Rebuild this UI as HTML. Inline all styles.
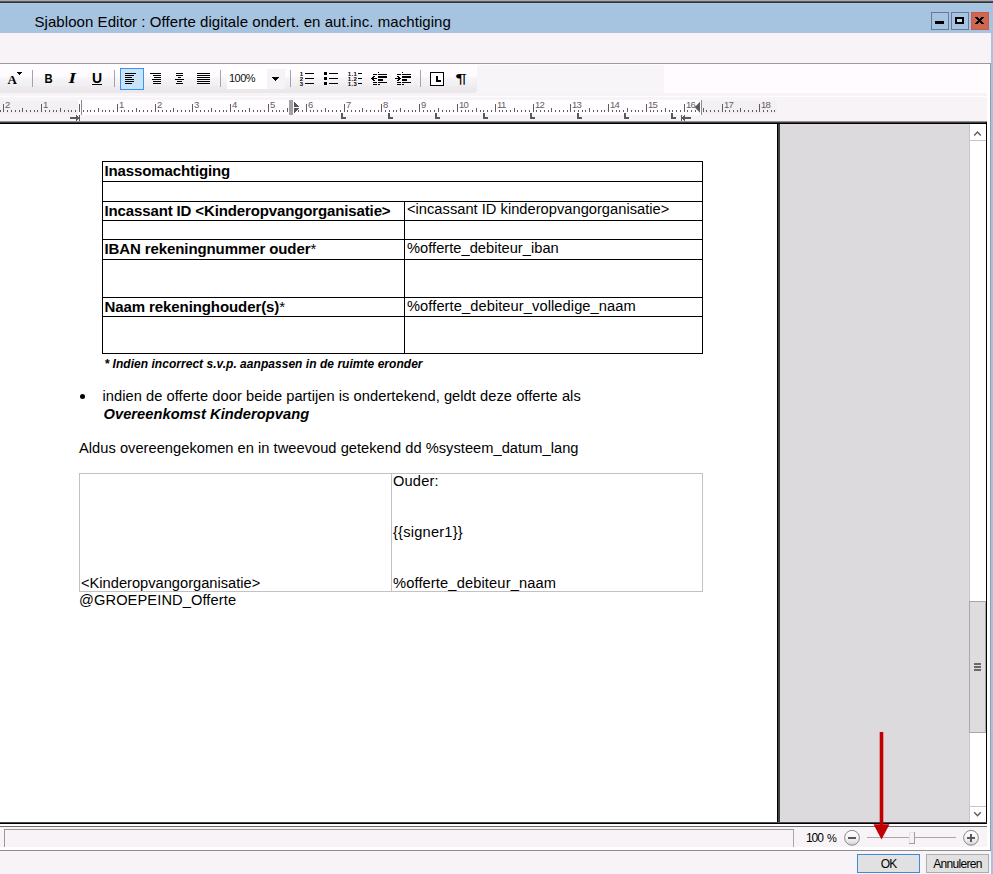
<!DOCTYPE html>
<html lang="nl">
<head>
<meta charset="utf-8">
<title>Sjabloon Editor</title>
<style>
*{box-sizing:border-box;margin:0;padding:0}
html,body{width:993px;height:874px;overflow:hidden;background:#f7f3f7}
body{position:relative;font-family:"Liberation Sans",sans-serif;color:#000}
.abs{position:absolute}
#topshadow{left:0;top:0;width:993px;height:4px;background:linear-gradient(#a9a7a9 0,#a9a7a9 1px,#5c5a5c 1px,#5c5a5c 2px,#302f2f 2px,#302f2f 3px,#aecceb 3px)}
#title{left:0;top:3px;width:993px;height:30px;background:#a6c3e0}
#title .t{position:absolute;left:34.5px;top:10px;font-size:15px;line-height:18px;letter-spacing:0.06px;color:#000;white-space:nowrap}
.wb{position:absolute;top:9px;width:18px;height:18px;border:1px solid #677b97}
#rborder{left:991px;top:33px;width:2px;height:841px;background:#a6c3e0}
#menubg{left:0;top:33px;width:991px;height:30px;background:#f7f3f7}
#tbline{left:0;top:63px;width:991px;height:1px;background:#9c9a9c}
#tbright{left:990px;top:63px;width:1px;height:788px;background:#959aa6}
#tbbg{left:0;top:64px;width:990px;height:33px;background:#fffbff}
#tbstrip{left:0;top:65px;width:477px;height:28px;border-radius:0 3px 3px 0;background:linear-gradient(#fffdff 0,#fdfbfd 42%,#f7f5f7 45%,#f0eef0 74%,#edebed 77%,#e9e7e9 100%)}
#tbstrip2{left:477px;top:65px;width:187px;height:28px;background:#f7f5f7}
#tbunder{left:0;top:93px;width:987px;height:3px;background:#f7f3f7}
#rulerbg{left:0;top:97px;width:987px;height:25px;background:#f7f3f7}
.sep{position:absolute;top:70px;width:1px;height:17px;background:#a5a3a5}
#docframe-top{left:0;top:122px;width:987px;height:2px;background:linear-gradient(#3c3a3c 0,#3c3a3c 1px,#000 1px)}
#docframe-topsh{left:0;top:121px;width:987px;height:1px;background:#939193}
#doc{left:0;top:124px;width:777px;height:698px;background:#fff;overflow:hidden}
#docvline{left:777px;top:124px;width:4px;height:698px;background:linear-gradient(90deg,#000 0,#000 1px,#404040 1px,#404040 3px,#e5e3e5 3px)}
#grayarea{left:780px;top:124px;width:189px;height:698px;background:#dcdadc}
#sb{left:969px;top:124px;width:17px;height:698px;background:#fff;border-left:1px solid #c8c6c8}
#frame-right{left:985.7px;top:122px;width:1.3px;height:702px;background:#000}
#frame-bottom{left:0;top:822px;width:987px;height:2px;background:linear-gradient(#4a484a 0,#4a484a 1px,#000 1px)}
#whitegap{left:0;top:824px;width:990px;height:2px;background:#fff}
#rightwhite{left:987px;top:64px;width:3px;height:786px;background:#fff}
#stline{left:0;top:826px;width:987px;height:1px;background:#6e6c6e}
#stbg{left:0;top:827px;width:987px;height:20px;background:#f7f3f7}
#stwhite{left:0;top:847px;width:990px;height:3px;background:#fff}
#stline2{left:0;top:850px;width:991px;height:1px;background:#8e8c8e}
#botbg{left:0;top:851px;width:991px;height:23px;background:#f7f3f7}
#stpanel{left:4px;top:829px;width:790px;height:18px;border-top:1px solid #9a989a;border-left:1px solid #9a989a;border-right:1px solid #a9a7a9}
.btn{position:absolute;top:854px;height:19px;background:#e1e1e1;border:1px solid #adadad;font-size:12px;line-height:18px;text-align:center;color:#000}
.dt{position:absolute;white-space:nowrap;font-size:14.67px;line-height:17px;color:#000}
.b{font-weight:bold}
.hl{position:absolute;height:1px;background:#000}
.vl{position:absolute;width:1px;background:#000}
.gl{position:absolute;background:#c3c1c3}
</style>
</head>
<body>
<div class="abs" id="title"><div class="t">Sjabloon Editor : Offerte digitale ondert. en aut.inc. machtiging</div>
  <div class="wb" style="left:931px"></div>
  <div class="wb" style="left:951px"></div>
  <div class="wb" style="left:971px;background:#ce6651;border-color:#c45c48"></div>
<svg class="abs" style="left:0;top:0" width="993" height="30" viewBox="0 3 993 30" shape-rendering="crispEdges" fill="#000">
<rect x="935" y="21" width="9" height="3"/>
<rect x="955" y="17" width="9" height="7"/><rect x="957" y="19" width="5" height="3" fill="#c6dbf0"/>
<rect x="975" y="17" width="3" height="1"/><rect x="981" y="17" width="3" height="1"/>
<rect x="976" y="18" width="3" height="1"/><rect x="980" y="18" width="3" height="1"/>
<rect x="977" y="19" width="5" height="1"/>
<rect x="978" y="20" width="3" height="1"/>
<rect x="977" y="21" width="5" height="1"/>
<rect x="976" y="22" width="3" height="1"/><rect x="980" y="22" width="3" height="1"/>
<rect x="975" y="23" width="3" height="1"/><rect x="981" y="23" width="3" height="1"/>
</svg>
</div>
<div class="abs" id="topshadow"></div>
<div class="abs" id="menubg"></div>
<div class="abs" id="tbbg"></div>
<div class="abs" id="tbstrip2"></div>
<div class="abs" id="tbstrip"></div>
<div class="abs" id="tbunder"></div>
<div class="abs" id="rulerbg"></div>
<div class="abs" id="tbline"></div>
<div class="abs" id="rightwhite"></div>
<div class="abs" id="tbright"></div>
<div class="abs" id="rborder"></div>
<!-- toolbar widgets -->
<div class="sep" style="left:32px"></div>
<div class="sep" style="left:114px"></div>
<div class="sep" style="left:220px"></div>
<div class="sep" style="left:290px"></div>
<div class="sep" style="left:420px"></div>
<div class="abs" id="selbtn" style="left:120px;top:68px;width:24px;height:22px;background:#c9e3fb;border:1px solid #3796f5"></div>
<div class="abs" id="combo" style="left:227px;top:69px;width:58px;height:20px;background:#fff"><div class="abs" style="left:40px;top:0;width:18px;height:20px;background:#f6f3f6"></div><div class="abs" id="combotxt" style="left:2px;top:3px;font-size:11px;line-height:13px;letter-spacing:-0.55px;color:#111">100%</div></div>
<svg class="abs" id="tbicons" style="left:0;top:0" width="480" height="100" viewBox="0 0 480 100" shape-rendering="crispEdges" fill="#000"><rect x="17" y="72" width="5" height="1"/><rect x="18" y="73" width="3" height="1"/><rect x="19" y="74" width="1" height="1"/><rect x="92" y="84" width="10" height="1"/><rect x="125" y="73" width="11" height="1"/><rect x="125" y="75" width="9" height="1"/><rect x="125" y="77" width="7" height="1"/><rect x="125" y="79" width="9" height="1"/><rect x="125" y="81" width="9" height="1"/><rect x="125" y="83" width="7" height="1"/><rect x="150" y="73" width="11" height="1"/><rect x="153" y="75" width="8" height="1"/><rect x="154" y="77" width="7" height="1"/><rect x="152" y="79" width="9" height="1"/><rect x="153" y="81" width="8" height="1"/><rect x="153" y="83" width="8" height="1"/><rect x="176" y="73" width="7" height="1"/><rect x="176" y="75" width="7" height="1"/><rect x="178" y="77" width="3" height="1"/><rect x="175" y="79" width="9" height="1"/><rect x="177" y="81" width="5" height="1"/><rect x="176" y="83" width="7" height="1"/><rect x="197" y="73" width="13" height="1"/><rect x="197" y="75" width="13" height="1"/><rect x="197" y="77" width="13" height="1"/><rect x="197" y="79" width="13" height="1"/><rect x="197" y="81" width="13" height="1"/><rect x="197" y="83" width="13" height="1"/><rect x="272" y="77" width="7" height="1"/><rect x="273" y="78" width="5" height="1"/><rect x="274" y="79" width="3" height="1"/><rect x="275" y="80" width="1" height="1"/><rect x="305" y="73" width="9" height="1"/><rect x="305" y="78" width="9" height="1"/><rect x="305" y="83" width="9" height="1"/><rect x="324" y="72" width="3" height="3"/><rect x="324" y="77" width="3" height="3"/><rect x="324" y="82" width="3" height="3"/><rect x="329" y="73" width="9" height="1"/><rect x="329" y="78" width="9" height="1"/><rect x="329" y="83" width="9" height="1"/><rect x="358" y="73" width="4" height="1"/><rect x="358" y="78" width="4" height="1"/><rect x="358" y="83" width="4" height="1"/><rect x="378" y="72" width="1" height="1"/><rect x="373" y="74" width="4" height="1"/><rect x="378" y="74" width="9" height="1"/><rect x="373" y="76" width="2" height="1"/><rect x="378" y="76" width="9" height="1"/><rect x="372" y="77" width="2" height="1"/><rect x="378" y="77" width="9" height="1"/><rect x="371" y="78" width="6" height="1"/><rect x="372" y="79" width="2" height="1"/><rect x="378" y="79" width="5" height="1"/><rect x="373" y="80" width="2" height="1"/><rect x="378" y="80" width="5" height="1"/><rect x="373" y="82" width="4" height="1"/><rect x="378" y="82" width="9" height="1"/><rect x="373" y="84" width="4" height="1"/><rect x="378" y="84" width="2" height="1"/><rect x="402" y="72" width="1" height="1"/><rect x="397" y="74" width="4" height="1"/><rect x="402" y="74" width="9" height="1"/><rect x="397" y="76" width="2" height="1"/><rect x="402" y="76" width="9" height="1"/><rect x="398" y="77" width="2" height="1"/><rect x="402" y="77" width="9" height="1"/><rect x="395" y="78" width="6" height="1"/><rect x="398" y="79" width="2" height="1"/><rect x="402" y="79" width="5" height="1"/><rect x="397" y="80" width="2" height="1"/><rect x="402" y="80" width="5" height="1"/><rect x="397" y="82" width="4" height="1"/><rect x="402" y="82" width="9" height="1"/><rect x="397" y="84" width="4" height="1"/><rect x="402" y="84" width="2" height="1"/><rect x="430.5" y="72.5" width="13" height="13" fill="#fff" stroke="#000" stroke-width="1"/><rect x="436" y="76" width="2" height="6"/><rect x="436" y="80" width="5" height="2"/><text x="7.6" y="84" font-family="Liberation Serif, serif" font-weight="bold" font-size="13px">A</text><text transform="translate(44.5 83) scale(.9 1)" font-family="Liberation Sans, sans-serif" font-weight="bold" font-size="12.5px">B</text><text transform="translate(68.6 83) scale(1.3 1)" font-family="Liberation Serif, serif" font-weight="bold" font-style="italic" font-size="15px">I</text><text x="91.9" y="83" font-family="Liberation Sans, sans-serif" font-weight="bold" font-size="14px">U</text><text x="299.8" y="76" font-family="Liberation Sans, sans-serif" font-weight="bold" font-size="6px">1</text><text x="299.8" y="81" font-family="Liberation Sans, sans-serif" font-weight="bold" font-size="6px">2</text><text x="299.8" y="86" font-family="Liberation Sans, sans-serif" font-weight="bold" font-size="6px">3</text><text x="347.8" y="76" font-family="Liberation Sans, sans-serif" font-weight="bold" font-size="6px" letter-spacing="0.3">1.1</text><text x="347.8" y="81" font-family="Liberation Sans, sans-serif" font-weight="bold" font-size="6px" letter-spacing="0.3">1.2</text><text x="347.8" y="86" font-family="Liberation Sans, sans-serif" font-weight="bold" font-size="6px" letter-spacing="0.3">1.3</text><text transform="translate(455.2 82.6) scale(1.62 1)" font-family="Liberation Sans, sans-serif" font-size="13.5px">¶</text></svg>
<svg class="abs" id="ruler" style="left:0;top:0" width="780" height="124" viewBox="0 0 780 124" shape-rendering="crispEdges"><rect x="0" y="101" width="78" height="13" fill="#f3f0f3"/><rect x="702" y="101" width="75" height="13" fill="#f2f0f2"/><rect x="78" y="100" width="4" height="15" fill="#fffdff"/><rect x="82" y="100" width="619" height="15" fill="#fffdff"/><rect x="81" y="100" width="1" height="15" fill="#8c8a8c"/><rect x="701" y="100" width="1" height="15" fill="#8c8a8c"/><rect x="0" y="110" width="1" height="2" fill="#5f5d5f"/><rect x="3" y="104" width="1" height="8" fill="#5f5d5f"/><rect x="7" y="110" width="1" height="2" fill="#5f5d5f"/><rect x="11" y="110" width="1" height="2" fill="#5f5d5f"/><rect x="15" y="110" width="1" height="2" fill="#5f5d5f"/><rect x="19" y="110" width="1" height="2" fill="#5f5d5f"/><rect x="22" y="108" width="1" height="4" fill="#5f5d5f"/><rect x="26" y="110" width="1" height="2" fill="#5f5d5f"/><rect x="30" y="110" width="1" height="2" fill="#5f5d5f"/><rect x="34" y="110" width="1" height="2" fill="#5f5d5f"/><rect x="37" y="110" width="1" height="2" fill="#5f5d5f"/><rect x="41" y="104" width="1" height="8" fill="#5f5d5f"/><rect x="45" y="110" width="1" height="2" fill="#5f5d5f"/><rect x="49" y="110" width="1" height="2" fill="#5f5d5f"/><rect x="53" y="110" width="1" height="2" fill="#5f5d5f"/><rect x="56" y="110" width="1" height="2" fill="#5f5d5f"/><rect x="60" y="108" width="1" height="4" fill="#5f5d5f"/><rect x="64" y="110" width="1" height="2" fill="#5f5d5f"/><rect x="68" y="110" width="1" height="2" fill="#5f5d5f"/><rect x="71" y="110" width="1" height="2" fill="#5f5d5f"/><rect x="75" y="110" width="1" height="2" fill="#5f5d5f"/><rect x="79" y="104" width="1" height="8" fill="#5f5d5f"/><rect x="83" y="110" width="1" height="2" fill="#5f5d5f"/><rect x="87" y="110" width="1" height="2" fill="#5f5d5f"/><rect x="90" y="110" width="1" height="2" fill="#5f5d5f"/><rect x="94" y="110" width="1" height="2" fill="#5f5d5f"/><rect x="98" y="108" width="1" height="4" fill="#5f5d5f"/><rect x="102" y="110" width="1" height="2" fill="#5f5d5f"/><rect x="105" y="110" width="1" height="2" fill="#5f5d5f"/><rect x="109" y="110" width="1" height="2" fill="#5f5d5f"/><rect x="113" y="110" width="1" height="2" fill="#5f5d5f"/><rect x="117" y="104" width="1" height="8" fill="#5f5d5f"/><rect x="121" y="110" width="1" height="2" fill="#5f5d5f"/><rect x="124" y="110" width="1" height="2" fill="#5f5d5f"/><rect x="128" y="110" width="1" height="2" fill="#5f5d5f"/><rect x="132" y="110" width="1" height="2" fill="#5f5d5f"/><rect x="136" y="108" width="1" height="4" fill="#5f5d5f"/><rect x="139" y="110" width="1" height="2" fill="#5f5d5f"/><rect x="143" y="110" width="1" height="2" fill="#5f5d5f"/><rect x="147" y="110" width="1" height="2" fill="#5f5d5f"/><rect x="151" y="110" width="1" height="2" fill="#5f5d5f"/><rect x="155" y="104" width="1" height="8" fill="#5f5d5f"/><rect x="158" y="110" width="1" height="2" fill="#5f5d5f"/><rect x="162" y="110" width="1" height="2" fill="#5f5d5f"/><rect x="166" y="110" width="1" height="2" fill="#5f5d5f"/><rect x="170" y="110" width="1" height="2" fill="#5f5d5f"/><rect x="173" y="108" width="1" height="4" fill="#5f5d5f"/><rect x="177" y="110" width="1" height="2" fill="#5f5d5f"/><rect x="181" y="110" width="1" height="2" fill="#5f5d5f"/><rect x="185" y="110" width="1" height="2" fill="#5f5d5f"/><rect x="189" y="110" width="1" height="2" fill="#5f5d5f"/><rect x="192" y="104" width="1" height="8" fill="#5f5d5f"/><rect x="196" y="110" width="1" height="2" fill="#5f5d5f"/><rect x="200" y="110" width="1" height="2" fill="#5f5d5f"/><rect x="204" y="110" width="1" height="2" fill="#5f5d5f"/><rect x="208" y="110" width="1" height="2" fill="#5f5d5f"/><rect x="211" y="108" width="1" height="4" fill="#5f5d5f"/><rect x="215" y="110" width="1" height="2" fill="#5f5d5f"/><rect x="219" y="110" width="1" height="2" fill="#5f5d5f"/><rect x="223" y="110" width="1" height="2" fill="#5f5d5f"/><rect x="226" y="110" width="1" height="2" fill="#5f5d5f"/><rect x="230" y="104" width="1" height="8" fill="#5f5d5f"/><rect x="234" y="110" width="1" height="2" fill="#5f5d5f"/><rect x="238" y="110" width="1" height="2" fill="#5f5d5f"/><rect x="242" y="110" width="1" height="2" fill="#5f5d5f"/><rect x="245" y="110" width="1" height="2" fill="#5f5d5f"/><rect x="249" y="108" width="1" height="4" fill="#5f5d5f"/><rect x="253" y="110" width="1" height="2" fill="#5f5d5f"/><rect x="257" y="110" width="1" height="2" fill="#5f5d5f"/><rect x="260" y="110" width="1" height="2" fill="#5f5d5f"/><rect x="264" y="110" width="1" height="2" fill="#5f5d5f"/><rect x="268" y="104" width="1" height="8" fill="#5f5d5f"/><rect x="272" y="110" width="1" height="2" fill="#5f5d5f"/><rect x="276" y="110" width="1" height="2" fill="#5f5d5f"/><rect x="279" y="110" width="1" height="2" fill="#5f5d5f"/><rect x="283" y="110" width="1" height="2" fill="#5f5d5f"/><rect x="287" y="108" width="1" height="4" fill="#5f5d5f"/><rect x="291" y="110" width="1" height="2" fill="#5f5d5f"/><rect x="294" y="110" width="1" height="2" fill="#5f5d5f"/><rect x="298" y="110" width="1" height="2" fill="#5f5d5f"/><rect x="302" y="110" width="1" height="2" fill="#5f5d5f"/><rect x="306" y="104" width="1" height="8" fill="#5f5d5f"/><rect x="310" y="110" width="1" height="2" fill="#5f5d5f"/><rect x="313" y="110" width="1" height="2" fill="#5f5d5f"/><rect x="317" y="110" width="1" height="2" fill="#5f5d5f"/><rect x="321" y="110" width="1" height="2" fill="#5f5d5f"/><rect x="325" y="108" width="1" height="4" fill="#5f5d5f"/><rect x="328" y="110" width="1" height="2" fill="#5f5d5f"/><rect x="332" y="110" width="1" height="2" fill="#5f5d5f"/><rect x="336" y="110" width="1" height="2" fill="#5f5d5f"/><rect x="340" y="110" width="1" height="2" fill="#5f5d5f"/><rect x="344" y="104" width="1" height="8" fill="#5f5d5f"/><rect x="347" y="110" width="1" height="2" fill="#5f5d5f"/><rect x="351" y="110" width="1" height="2" fill="#5f5d5f"/><rect x="355" y="110" width="1" height="2" fill="#5f5d5f"/><rect x="359" y="110" width="1" height="2" fill="#5f5d5f"/><rect x="362" y="108" width="1" height="4" fill="#5f5d5f"/><rect x="366" y="110" width="1" height="2" fill="#5f5d5f"/><rect x="370" y="110" width="1" height="2" fill="#5f5d5f"/><rect x="374" y="110" width="1" height="2" fill="#5f5d5f"/><rect x="378" y="110" width="1" height="2" fill="#5f5d5f"/><rect x="381" y="104" width="1" height="8" fill="#5f5d5f"/><rect x="385" y="110" width="1" height="2" fill="#5f5d5f"/><rect x="389" y="110" width="1" height="2" fill="#5f5d5f"/><rect x="393" y="110" width="1" height="2" fill="#5f5d5f"/><rect x="396" y="110" width="1" height="2" fill="#5f5d5f"/><rect x="400" y="108" width="1" height="4" fill="#5f5d5f"/><rect x="404" y="110" width="1" height="2" fill="#5f5d5f"/><rect x="408" y="110" width="1" height="2" fill="#5f5d5f"/><rect x="412" y="110" width="1" height="2" fill="#5f5d5f"/><rect x="415" y="110" width="1" height="2" fill="#5f5d5f"/><rect x="419" y="104" width="1" height="8" fill="#5f5d5f"/><rect x="423" y="110" width="1" height="2" fill="#5f5d5f"/><rect x="427" y="110" width="1" height="2" fill="#5f5d5f"/><rect x="430" y="110" width="1" height="2" fill="#5f5d5f"/><rect x="434" y="110" width="1" height="2" fill="#5f5d5f"/><rect x="438" y="108" width="1" height="4" fill="#5f5d5f"/><rect x="442" y="110" width="1" height="2" fill="#5f5d5f"/><rect x="446" y="110" width="1" height="2" fill="#5f5d5f"/><rect x="449" y="110" width="1" height="2" fill="#5f5d5f"/><rect x="453" y="110" width="1" height="2" fill="#5f5d5f"/><rect x="457" y="104" width="1" height="8" fill="#5f5d5f"/><rect x="461" y="110" width="1" height="2" fill="#5f5d5f"/><rect x="465" y="110" width="1" height="2" fill="#5f5d5f"/><rect x="468" y="110" width="1" height="2" fill="#5f5d5f"/><rect x="472" y="110" width="1" height="2" fill="#5f5d5f"/><rect x="476" y="108" width="1" height="4" fill="#5f5d5f"/><rect x="480" y="110" width="1" height="2" fill="#5f5d5f"/><rect x="483" y="110" width="1" height="2" fill="#5f5d5f"/><rect x="487" y="110" width="1" height="2" fill="#5f5d5f"/><rect x="491" y="110" width="1" height="2" fill="#5f5d5f"/><rect x="495" y="104" width="1" height="8" fill="#5f5d5f"/><rect x="499" y="110" width="1" height="2" fill="#5f5d5f"/><rect x="502" y="110" width="1" height="2" fill="#5f5d5f"/><rect x="506" y="110" width="1" height="2" fill="#5f5d5f"/><rect x="510" y="110" width="1" height="2" fill="#5f5d5f"/><rect x="514" y="108" width="1" height="4" fill="#5f5d5f"/><rect x="517" y="110" width="1" height="2" fill="#5f5d5f"/><rect x="521" y="110" width="1" height="2" fill="#5f5d5f"/><rect x="525" y="110" width="1" height="2" fill="#5f5d5f"/><rect x="529" y="110" width="1" height="2" fill="#5f5d5f"/><rect x="533" y="104" width="1" height="8" fill="#5f5d5f"/><rect x="536" y="110" width="1" height="2" fill="#5f5d5f"/><rect x="540" y="110" width="1" height="2" fill="#5f5d5f"/><rect x="544" y="110" width="1" height="2" fill="#5f5d5f"/><rect x="548" y="110" width="1" height="2" fill="#5f5d5f"/><rect x="551" y="108" width="1" height="4" fill="#5f5d5f"/><rect x="555" y="110" width="1" height="2" fill="#5f5d5f"/><rect x="559" y="110" width="1" height="2" fill="#5f5d5f"/><rect x="563" y="110" width="1" height="2" fill="#5f5d5f"/><rect x="567" y="110" width="1" height="2" fill="#5f5d5f"/><rect x="570" y="104" width="1" height="8" fill="#5f5d5f"/><rect x="574" y="110" width="1" height="2" fill="#5f5d5f"/><rect x="578" y="110" width="1" height="2" fill="#5f5d5f"/><rect x="582" y="110" width="1" height="2" fill="#5f5d5f"/><rect x="585" y="110" width="1" height="2" fill="#5f5d5f"/><rect x="589" y="108" width="1" height="4" fill="#5f5d5f"/><rect x="593" y="110" width="1" height="2" fill="#5f5d5f"/><rect x="597" y="110" width="1" height="2" fill="#5f5d5f"/><rect x="601" y="110" width="1" height="2" fill="#5f5d5f"/><rect x="604" y="110" width="1" height="2" fill="#5f5d5f"/><rect x="608" y="104" width="1" height="8" fill="#5f5d5f"/><rect x="612" y="110" width="1" height="2" fill="#5f5d5f"/><rect x="616" y="110" width="1" height="2" fill="#5f5d5f"/><rect x="619" y="110" width="1" height="2" fill="#5f5d5f"/><rect x="623" y="110" width="1" height="2" fill="#5f5d5f"/><rect x="627" y="108" width="1" height="4" fill="#5f5d5f"/><rect x="631" y="110" width="1" height="2" fill="#5f5d5f"/><rect x="635" y="110" width="1" height="2" fill="#5f5d5f"/><rect x="638" y="110" width="1" height="2" fill="#5f5d5f"/><rect x="642" y="110" width="1" height="2" fill="#5f5d5f"/><rect x="646" y="104" width="1" height="8" fill="#5f5d5f"/><rect x="650" y="110" width="1" height="2" fill="#5f5d5f"/><rect x="653" y="110" width="1" height="2" fill="#5f5d5f"/><rect x="657" y="110" width="1" height="2" fill="#5f5d5f"/><rect x="661" y="110" width="1" height="2" fill="#5f5d5f"/><rect x="665" y="108" width="1" height="4" fill="#5f5d5f"/><rect x="669" y="110" width="1" height="2" fill="#5f5d5f"/><rect x="672" y="110" width="1" height="2" fill="#5f5d5f"/><rect x="676" y="110" width="1" height="2" fill="#5f5d5f"/><rect x="680" y="110" width="1" height="2" fill="#5f5d5f"/><rect x="684" y="104" width="1" height="8" fill="#5f5d5f"/><rect x="687" y="110" width="1" height="2" fill="#5f5d5f"/><rect x="691" y="110" width="1" height="2" fill="#5f5d5f"/><rect x="695" y="110" width="1" height="2" fill="#5f5d5f"/><rect x="699" y="110" width="1" height="2" fill="#5f5d5f"/><rect x="703" y="108" width="1" height="4" fill="#5f5d5f"/><rect x="706" y="110" width="1" height="2" fill="#5f5d5f"/><rect x="710" y="110" width="1" height="2" fill="#5f5d5f"/><rect x="714" y="110" width="1" height="2" fill="#5f5d5f"/><rect x="718" y="110" width="1" height="2" fill="#5f5d5f"/><rect x="722" y="104" width="1" height="8" fill="#5f5d5f"/><rect x="725" y="110" width="1" height="2" fill="#5f5d5f"/><rect x="729" y="110" width="1" height="2" fill="#5f5d5f"/><rect x="733" y="110" width="1" height="2" fill="#5f5d5f"/><rect x="737" y="110" width="1" height="2" fill="#5f5d5f"/><rect x="740" y="108" width="1" height="4" fill="#5f5d5f"/><rect x="744" y="110" width="1" height="2" fill="#5f5d5f"/><rect x="748" y="110" width="1" height="2" fill="#5f5d5f"/><rect x="752" y="110" width="1" height="2" fill="#5f5d5f"/><rect x="756" y="110" width="1" height="2" fill="#5f5d5f"/><rect x="759" y="104" width="1" height="8" fill="#5f5d5f"/><rect x="763" y="110" width="1" height="2" fill="#5f5d5f"/><rect x="767" y="110" width="1" height="2" fill="#5f5d5f"/><rect x="771" y="110" width="1" height="2" fill="#5f5d5f"/><rect x="774" y="110" width="1" height="2" fill="#5f5d5f"/><g font-family="Liberation Sans, sans-serif" font-size="9.5px" letter-spacing="-0.7" fill="#626062" shape-rendering="auto"><text x="5" y="108" >2</text><text x="43" y="108" >1</text><text x="119" y="108" >1</text><text x="157" y="108" >2</text><text x="194" y="108" >3</text><text x="232" y="108" >4</text><text x="270" y="108" >5</text><text x="308" y="108" >6</text><text x="346" y="108" >7</text><text x="383" y="108" >8</text><text x="421" y="108" >9</text><text x="459" y="108" >10</text><text x="497" y="108" >11</text><text x="535" y="108" >12</text><text x="572" y="108" >13</text><text x="610" y="108" >14</text><text x="648" y="108" >15</text><text x="686" y="108" >16</text><text x="724" y="108" >17</text><text x="761" y="108" >18</text></g><rect x="289" y="100" width="4" height="15" fill="#a3a1a3"/><rect x="294" y="102" width="1" height="1" fill="#565656"/><rect x="294" y="112" width="1" height="1" fill="#565656"/><rect x="294" y="103" width="2" height="1" fill="#565656"/><rect x="294" y="111" width="2" height="1" fill="#565656"/><rect x="294" y="104" width="3" height="1" fill="#565656"/><rect x="294" y="110" width="3" height="1" fill="#565656"/><rect x="294" y="105" width="4" height="1" fill="#565656"/><rect x="294" y="109" width="4" height="1" fill="#565656"/><rect x="294" y="106" width="5" height="1" fill="#565656"/><rect x="294" y="108" width="5" height="1" fill="#565656"/><polygon points="700,101.8 700,112.8 694.7,107.3" fill="#5a5a5a" shape-rendering="auto"/><rect x="341" y="113" width="2" height="6" fill="#5a585a"/><rect x="341" y="117" width="5" height="2" fill="#5a585a"/><rect x="388" y="113" width="2" height="6" fill="#5a585a"/><rect x="388" y="117" width="5" height="2" fill="#5a585a"/><rect x="435" y="113" width="2" height="6" fill="#5a585a"/><rect x="435" y="117" width="5" height="2" fill="#5a585a"/><rect x="483" y="113" width="2" height="6" fill="#5a585a"/><rect x="483" y="117" width="5" height="2" fill="#5a585a"/><rect x="530" y="113" width="2" height="6" fill="#5a585a"/><rect x="530" y="117" width="5" height="2" fill="#5a585a"/><rect x="577" y="113" width="2" height="6" fill="#5a585a"/><rect x="577" y="117" width="5" height="2" fill="#5a585a"/><rect x="624" y="113" width="2" height="6" fill="#5a585a"/><rect x="624" y="117" width="5" height="2" fill="#5a585a"/><rect x="671" y="113" width="2" height="6" fill="#5a585a"/><rect x="671" y="117" width="5" height="2" fill="#5a585a"/><rect x="70" y="117" width="9" height="2" fill="#5a585a"/><rect x="76" y="115" width="1" height="6" fill="#5a585a"/><rect x="77" y="116" width="1" height="4" fill="#5a585a"/><rect x="79" y="115" width="1" height="6" fill="#5a585a"/><rect x="681" y="115" width="1" height="6" fill="#5a585a"/><rect x="683" y="117" width="8" height="2" fill="#5a585a"/><rect x="684" y="115" width="1" height="6" fill="#5a585a"/><rect x="683" y="116" width="1" height="4" fill="#5a585a"/><rect x="682" y="117" width="1" height="2" fill="#5a585a"/></svg>

<div class="abs" id="doc"></div>

<!-- document content -->
<div id="doccontent">
<!-- table 1 borders -->
<div class="hl" style="left:102px;top:161px;width:601px"></div>
<div class="hl" style="left:102px;top:181px;width:601px"></div>
<div class="hl" style="left:102px;top:201px;width:601px"></div>
<div class="hl" style="left:102px;top:220px;width:601px"></div>
<div class="hl" style="left:102px;top:239px;width:601px"></div>
<div class="hl" style="left:102px;top:259px;width:601px"></div>
<div class="hl" style="left:102px;top:297px;width:601px"></div>
<div class="hl" style="left:102px;top:316px;width:601px"></div>
<div class="hl" style="left:102px;top:353px;width:601px"></div>
<div class="vl" style="left:102px;top:161px;height:193px"></div>
<div class="vl" style="left:702px;top:161px;height:193px"></div>
<div class="vl" style="left:404px;top:201px;height:153px"></div>
<div class="dt b" style="left:104.5px;top:162.3px;font-size:15px;letter-spacing:-.12px">Inassomachtiging</div>
<div class="dt b" style="left:104.5px;top:202.3px;font-size:15px;letter-spacing:-.13px">Incassant ID &lt;Kinderopvangorganisatie&gt;</div>
<div class="dt" style="left:407px;top:201px;letter-spacing:.02px">&lt;incassant ID kinderopvangorganisatie&gt;</div>
<div class="dt b" style="left:104.5px;top:240.3px;font-size:15px;letter-spacing:-.1px">IBAN rekeningnummer ouder<span style="font-weight:normal">*</span></div>
<div class="dt" style="left:407px;top:239.5px;letter-spacing:.02px">%offerte_debiteur_iban</div>
<div class="dt b" style="left:104.5px;top:297.8px;font-size:15px;letter-spacing:-.09px">Naam rekeninghouder(s)<span style="font-weight:normal">*</span></div>
<div class="dt" style="left:407px;top:297.5px;letter-spacing:.08px">%offerte_debiteur_volledige_naam</div>
<div class="dt b" style="left:104.5px;top:356.7px;font-size:12px;line-height:14px;font-style:italic;letter-spacing:.035px">* Indien incorrect s.v.p. aanpassen in de ruimte eronder</div>
<!-- bullet paragraph -->
<div class="abs" style="left:79.5px;top:393.8px;width:5.4px;height:5.4px;border-radius:50%;background:#000"></div>
<div class="dt" style="left:102.5px;top:388px;letter-spacing:.05px">indien de offerte door beide partijen is ondertekend, geldt deze offerte als</div>
<div class="dt b" style="left:103.5px;top:406px;font-style:italic;letter-spacing:.05px">Overeenkomst Kinderopvang</div>
<div class="dt" style="left:79px;top:439.5px;letter-spacing:.025px">Aldus overeengekomen en in tweevoud getekend dd %systeem_datum_lang</div>
<!-- table 2 -->
<div class="gl" style="left:79px;top:473px;width:624px;height:1px"></div>
<div class="gl" style="left:79px;top:591px;width:624px;height:1px"></div>
<div class="gl" style="left:79px;top:473px;width:1px;height:119px"></div>
<div class="gl" style="left:391px;top:473px;width:1px;height:119px"></div>
<div class="gl" style="left:702px;top:473px;width:1px;height:119px"></div>
<div class="dt" style="left:393px;top:473px;letter-spacing:.15px">Ouder:</div>
<div class="dt" style="left:393px;top:524px;letter-spacing:.2px">{{signer1}}</div>
<div class="dt" style="left:393px;top:575px;letter-spacing:.13px">%offerte_debiteur_naam</div>
<div class="dt" style="left:81px;top:575px">&lt;Kinderopvangorganisatie&gt;</div>
<div class="dt" style="left:79px;top:592px;letter-spacing:.09px">@GROEPEIND_Offerte</div>
</div>
<div class="abs" id="docvline"></div>
<div class="abs" id="grayarea"></div>
<div class="abs" id="sb"></div>
<div class="abs" id="docframe-topsh"></div>
<div class="abs" id="docframe-top"></div>
<div class="abs" id="frame-right"></div>
<div class="abs" id="frame-bottom"></div>
<div class="abs" id="whitegap"></div>
<div class="abs" id="stline"></div>
<div class="abs" id="stbg"></div>
<div class="abs" id="stpanel"></div>
<div class="abs" id="stwhite"></div>
<div class="abs" id="stline2"></div>
<div class="abs" id="botbg"></div>
<!-- scrollbar details -->
<div class="abs" style="left:970px;top:140px;width:16px;height:1px;background:#c6c4c6"></div>
<div class="abs" style="left:970px;top:806px;width:16px;height:1px;background:#c6c4c6"></div>
<div class="abs" id="thumb" style="left:969px;top:601px;width:17px;height:132px;background:#dedcde;border:1px solid #a9a7a9"></div>
<svg class="abs" style="left:960px;top:124px" width="30" height="700" viewBox="960 124 30 700">
<polyline points="974.2,135.4 977.5,131.9 980.8,135.4" fill="none" stroke="#5e5c5e" stroke-width="1.4"/>
<polyline points="974.2,812.2 977.5,815.7 980.8,812.2" fill="none" stroke="#5e5c5e" stroke-width="1.4"/>
<g shape-rendering="crispEdges" fill="#6a686a"><rect x="974" y="663" width="7" height="2"/><rect x="974" y="666" width="7" height="2"/><rect x="974" y="669" width="7" height="2"/></g>
</svg>
<!-- zoom controls -->
<div class="abs" id="zoomtxt" style="left:806px;top:831px;font-size:12px;line-height:14px;letter-spacing:-1.05px;word-spacing:1.8px;color:#000;white-space:nowrap">100 <span style="font-size:11px;letter-spacing:0">%</span></div>
<svg class="abs" style="left:840px;top:826px" width="150" height="24" viewBox="840 826 150 24">
<defs><linearGradient id="cg" x1="0" y1="0" x2="0" y2="1"><stop offset="0" stop-color="#ffffff"/><stop offset="0.55" stop-color="#f4f2f4"/><stop offset="1" stop-color="#d4d2d4"/></linearGradient></defs>
<circle cx="852" cy="837.8" r="7.4" fill="url(#cg)" stroke="#8c8a8c" stroke-width="1"/>
<circle cx="971" cy="837.8" r="7.4" fill="url(#cg)" stroke="#8c8a8c" stroke-width="1"/>
<g shape-rendering="crispEdges"><rect x="848" y="837" width="8" height="2" fill="#5a585a"/>
<rect x="967" y="837" width="8" height="2" fill="#5a585a"/><rect x="970" y="834" width="2" height="8" fill="#5a585a"/>
<rect x="867" y="837" width="89" height="1" fill="#a8a6a8"/>
<rect x="909" y="832" width="6" height="12" fill="#f4f2f4" stroke="none"/><rect x="914" y="832" width="1" height="12" fill="#a09ea0"/><rect x="909" y="843" width="6" height="1" fill="#a09ea0"/><rect x="909" y="832" width="5" height="1" fill="#e6e4e6"/><rect x="909" y="832" width="1" height="11" fill="#e6e4e6"/></g>
</svg>
<!-- red arrow -->
<svg class="abs" style="left:870px;top:728px" width="24" height="114" viewBox="870 728 24 114">
<rect x="879.7" y="732" width="3.6" height="94" fill="#c00000"/>
<polygon points="873.5,824.3 889.5,824.3 881.5,839.6" fill="#c00000"/>
</svg>
<div class="btn" style="left:857px;width:63px;border-color:#3c8ad8;letter-spacing:-1px">OK</div>
<div class="btn" style="left:926px;width:63px;letter-spacing:-.7px">Annuleren</div>
</body>
</html>
